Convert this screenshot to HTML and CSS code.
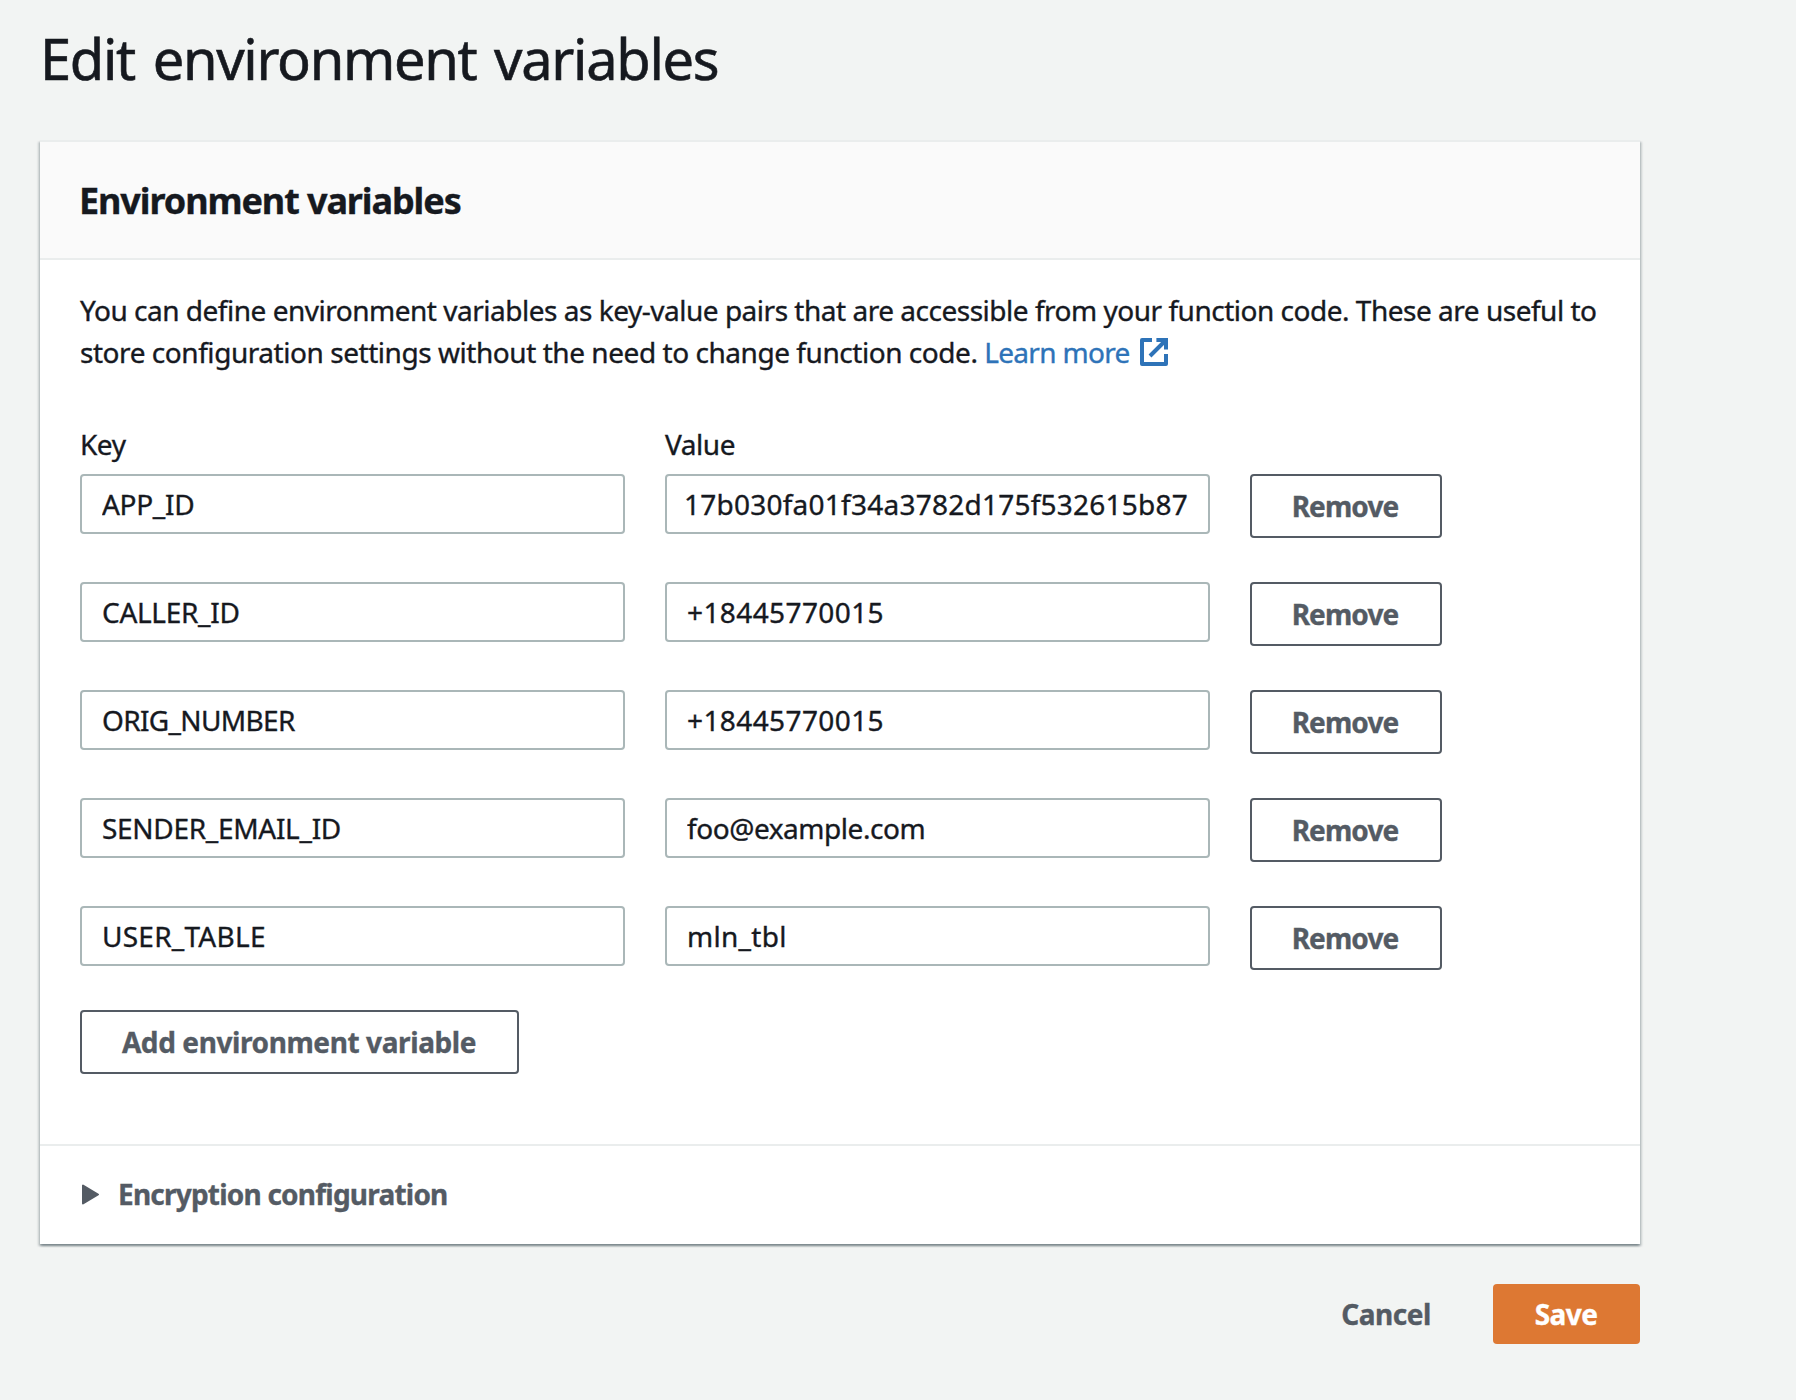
FILE: index.html
```html
<!DOCTYPE html>
<html lang="en">
<head>
<meta charset="utf-8">
<title>Edit environment variables</title>
<link rel="stylesheet" href="styles.css">
</head>
<body>
<main class="page">
  <h1 class="page-title">Edit environment variables</h1>

  <section class="card">
    <header class="card-header">
      <h2 class="card-title">Environment variables</h2>
    </header>

    <div class="card-body">
      <p class="intro">You can define environment variables as key-value pairs that are accessible from your function code. These are useful to<br><span class="intro-end">store configuration settings without the need to change function code.</span> <a class="link" href="#">Learn more<svg class="external" viewBox="0 0 16 16" aria-hidden="true"><path class="frame" d="M14 9v5H2V2h5"/><path d="M9.2 2H14v4.8M14 2 6 10"/></svg></a></p>

      <div class="variables">
        <label class="label" for="k1">Key</label>
        <label class="label" for="v1">Value</label>
        <span></span>

        <input class="input caps" id="k1" value="APP_ID">
        <input class="input hash" id="v1" value="17b030fa01f34a3782d175f532615b87">
        <button class="button outlined remove">Remove</button>

        <input class="input caps" aria-label="Key" value="CALLER_ID">
        <input class="input digits" aria-label="Value" value="+18445770015">
        <button class="button outlined remove">Remove</button>

        <input class="input caps-wide" aria-label="Key" value="ORIG_NUMBER">
        <input class="input digits" aria-label="Value" value="+18445770015">
        <button class="button outlined remove">Remove</button>

        <input class="input caps" aria-label="Key" value="SENDER_EMAIL_ID">
        <input class="input" aria-label="Value" value="foo@example.com">
        <button class="button outlined remove">Remove</button>

        <input class="input caps-narrow" aria-label="Key" value="USER_TABLE">
        <input class="input table-name" aria-label="Value" value="mln_tbl">
        <button class="button outlined remove">Remove</button>
      </div>

      <button class="button outlined add">Add environment variable</button>
    </div>

    <div class="expander">
      <svg class="caret" viewBox="0 0 17 21" aria-hidden="true"><path d="M1 1.5v18L16 10.5z"/></svg>
      <span class="expander-title">Encryption configuration</span>
    </div>
  </section>

  <footer class="actions">
    <button class="button cancel">Cancel</button>
    <button class="button save">Save</button>
  </footer>
</main>
</body>
</html>
```
FILE: styles.css
```css
* {
  box-sizing: border-box;
}

body {
  margin: 0;
  background: #f2f4f3;
  color: #16191f;
  font: 400 28px/42px "Noto Sans", sans-serif;
  letter-spacing: -0.46px;
  -webkit-text-stroke: 0.35px currentColor;
}

.page {
  width: 1640px;
  min-height: 1400px;
  padding: 24px 0 0 40px;
}

.page-title {
  margin: 0 0 48px;
  font-size: 56px;
  font-weight: 400;
  line-height: 68px;
  letter-spacing: -1.33px;
  word-spacing: 4.5px;
  -webkit-text-stroke-width: 0.6px;
}

.card {
  background: #fff;
  border-top: 2px solid #eaeded;
  box-shadow: 0 2px 2px 0 rgba(0, 28, 36, 0.3),
    2px 2px 2px 0 rgba(0, 28, 36, 0.15),
    -2px 2px 2px 0 rgba(0, 28, 36, 0.15);
}

.card-header {
  display: flex;
  align-items: center;
  height: 118px;
  padding: 2px 39px 0;
  background: #fafafa;
  border-bottom: 2px solid #eaeded;
}

.card-title {
  margin: 0;
  font-size: 36px;
  font-weight: 700;
  line-height: 44px;
  letter-spacing: -1.1px;
}

.card-body {
  padding: 29px 0 70px 40px;
}

.intro {
  margin: 0 0 50px;
  white-space: nowrap;
  letter-spacing: -0.486px;
}

.intro-end {
  letter-spacing: -0.45px;
}

.link {
  color: #2e73b8;
  text-decoration: none;
  letter-spacing: -0.7px;
}

.external {
  width: 32px;
  height: 32px;
  margin-left: 8px;
  vertical-align: -5px;
  fill: none;
  stroke: currentColor;
  stroke-width: 2;
}

.external .frame {
  stroke-linejoin: round;
}

.variables {
  display: grid;
  grid-template-columns: 545px 545px 192px;
  grid-template-rows: 51px repeat(4, 108px) 64px;
  column-gap: 40px;
  align-items: start;
  margin-bottom: 40px;
}

.input {
  width: 100%;
  height: 60px;
  padding: 0 20px;
  border: 2px solid #aab7b8;
  border-radius: 4px;
  background: #fff;
  color: inherit;
  font: inherit;
  letter-spacing: -0.45px;
}

.input.caps {
  letter-spacing: -0.3px;
}

.input.caps-wide {
  letter-spacing: -0.65px;
}

.input.caps-narrow {
  letter-spacing: 0.25px;
}

.input.digits {
  letter-spacing: 0.4px;
}

.input.hash {
  padding: 0 17px;
  letter-spacing: 0.24px;
}

.input.table-name {
  letter-spacing: 0.3px;
}

.button {
  height: 64px;
  padding: 0;
  border: 0;
  border-radius: 4px;
  background: transparent;
  color: #545b64;
  font: 700 28px/42px "Noto Sans", sans-serif;
}

.button.outlined {
  display: block;
  border: 2px solid #545b64;
  background: #fff;
}

.button.remove {
  width: 192px;
  padding-right: 2px;
  letter-spacing: -0.88px;
}

.button.add {
  width: 439px;
  padding-right: 1px;
  letter-spacing: -0.4px;
}

.expander {
  display: flex;
  align-items: center;
  gap: 19px;
  height: 100px;
  padding: 0 42px 2px;
  border-top: 2px solid #eaeded;
  color: #545b64;
}

.caret {
  width: 17px;
  height: 21px;
  fill: currentColor;
  stroke: currentColor;
  stroke-width: 2;
  stroke-linejoin: round;
}

.expander-title {
  font-weight: 700;
  letter-spacing: -0.78px;
}

.actions {
  display: flex;
  justify-content: flex-end;
  gap: 20px;
  padding-top: 40px;
}

.button.cancel {
  width: 174px;
  height: 60px;
  letter-spacing: -0.46px;
}

.button.save {
  width: 147px;
  height: 60px;
  padding-right: 1px;
  background: #dd7833;
  color: #fff;
  letter-spacing: -0.56px;
}
```
